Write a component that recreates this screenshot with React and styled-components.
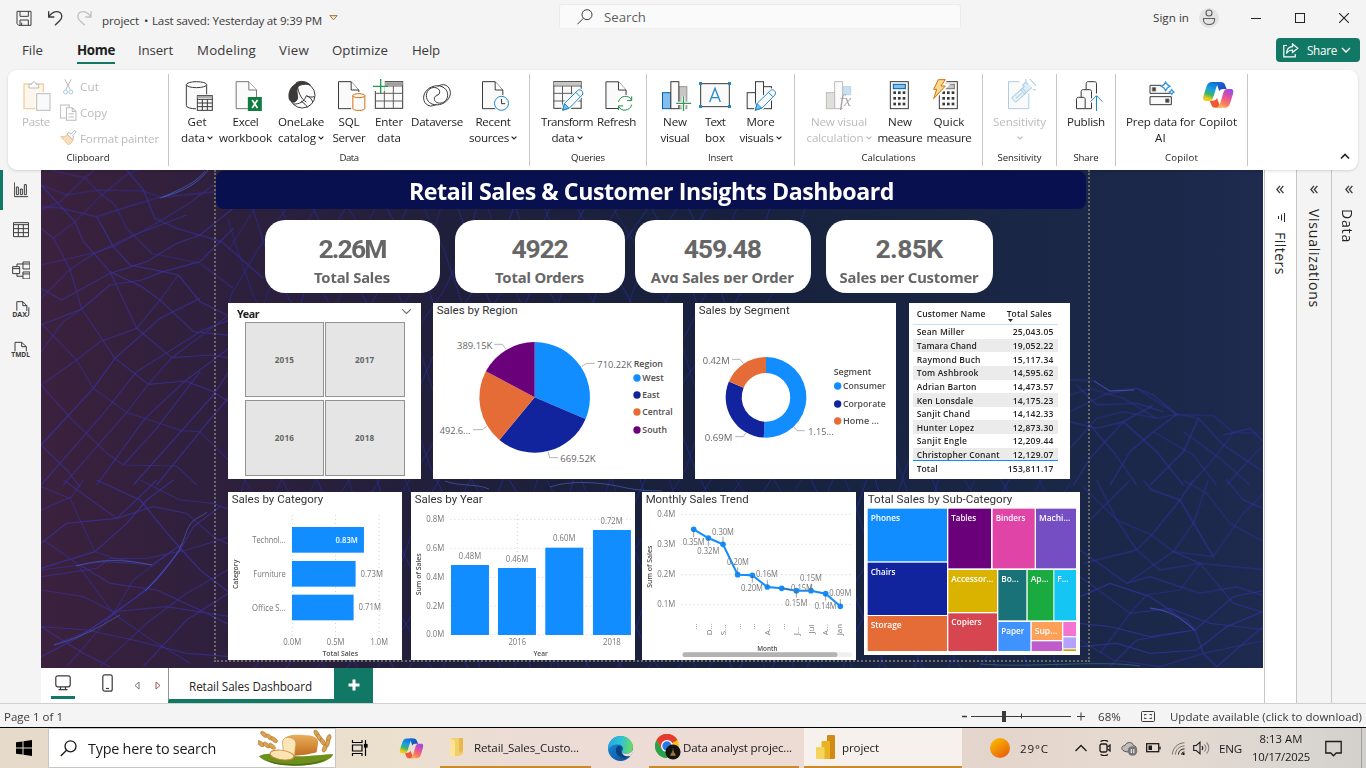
import React, { useLayoutEffect, useRef, useState } from "react";
import styled, { createGlobalStyle, css } from "styled-components";

const UI = '"Open Sans", "Noto Sans", sans-serif';
const DIN = 'Roboto, "Liberation Sans", sans-serif';
const GREEN = "#117865";

const Global = createGlobalStyle`
  * { box-sizing: border-box; }
  body { margin: 0; overflow: hidden; background: #f4f4f4; font-family: ${UI}; color: #252423; }
  svg { display: block; flex: none; }
  svg text { white-space: pre; }
`;

/* Text that settles to a known advance by adjusting its tracking. */
const FitSpan = styled.span`
  display: inline-block;
  justify-self: start;
  align-self: inherit;
  white-space: nowrap;
  ${(p) => p.$vertical && css`writing-mode: vertical-rl;`}
`;
function Fit({ w, vertical, children }) {
  const ref = useRef(null);
  const [ls, setLs] = useState(0);
  useLayoutEffect(() => {
    const el = ref.current;
    el.style.letterSpacing = "0px";
    const r = el.getBoundingClientRect();
    const next = (w - (vertical ? r.height : r.width)) / String(children).length;
    el.style.letterSpacing = `${next}px`;
    setLs(next);
  }, [w, vertical, children]);
  return (
    <FitSpan ref={ref} $vertical={vertical} style={{ letterSpacing: `${ls}px` }}>
      {children}
    </FitSpan>
  );
}

const Screen = styled.div`
  width: 1366px;
  height: 768px;
  display: flex;
  flex-direction: column;
  background: #f4f4f4;
  overflow: hidden;
`;
const Cell = styled.div`
  width: ${(p) => p.$w}px;
  flex: none;
  display: flex;
  align-items: center;
  justify-content: ${(p) => (p.$center ? "center" : "flex-start")};
`;

/* ---------- title bar ---------- */
const TitleBar = styled.header`
  height: 35px;
  display: flex;
  align-items: center;
  padding-left: 16px;
  font-size: 11.6px;
  color: #3b3a39;
  flex: none;
`;
const DocName = styled(Cell)`padding-top: 5px;`;
const SearchBox = styled.div`
  width: 402px;
  height: 25px;
  margin-top: -2px;
  background: #fafafa;
  border: 1px solid #ebebeb;
  border-bottom-color: #f0f0f0;
  border-radius: 3px;
  display: flex;
  align-items: center;
  padding-left: 17px;
  gap: 11px;
  font-size: 13.2px;
  color: #605e5c;
`;
const Avatar = styled.div`
  width: 20px;
  height: 20px;
  border-radius: 50%;
  background: #e3e3e3;
  display: flex;
  align-items: center;
  justify-content: center;
`;

/* ---------- menu ---------- */
const MenuBar = styled.nav`
  height: 35px;
  display: flex;
  align-items: flex-start;
  padding-left: 22px;
  font-size: 13.3px;
  color: #3b3a39;
  flex: none;
`;
const MenuItem = styled.div`
  width: ${(p) => p.$w}px;
  margin-right: ${(p) => p.$gap}px;
  height: 29px;
  line-height: 31px;
  flex: none;
  border-bottom: 2px solid ${(p) => (p.$active ? GREEN : "transparent")};
  ${(p) => p.$active && css`font-weight: 700; color: #201f1e;`}
`;
const ShareButton = styled.div`
  margin-left: auto;
  margin-right: 6px;
  margin-top: 3px;
  width: 84px;
  height: 24px;
  border-radius: 4px;
  background: ${GREEN};
  color: #fff;
  display: flex;
  align-items: center;
  padding-left: 7px;
  gap: 4px;
  font-size: 11.7px;
  font-weight: 500;
`;

/* ---------- ribbon ---------- */
const RibbonWrap = styled.div`
  height: 100px;
  padding: 0 8px;
  flex: none;
  position: relative;
  z-index: 2;
`;
const Ribbon = styled.div`
  height: 100px;
  background: #fff;
  border-radius: 9px;
  box-shadow: 0 1px 3px rgba(0, 0, 0, 0.14);
  display: flex;
  padding-top: 4px;
`;
const Group = styled.section`
  width: ${(p) => p.$w}px;
  height: 92px;
  flex: none;
  border-right: 1px solid #c8c6c4;
  display: flex;
  flex-direction: column;
  align-items: center;
`;
const GroupBody = styled.div`
  width: 100%;
  height: 77px;
  display: flex;
  padding-left: ${(p) => p.$pl}px;
`;
const GroupLabel = styled.div`
  height: 14px;
  line-height: 14px;
  font-size: 9.6px;
  color: #252423;
`;
const BigButton = styled.div`
  width: ${(p) => p.$w}px;
  flex: none;
  padding-top: 5px;
  display: flex;
  flex-direction: column;
  align-items: center;
  font-size: 11.6px;
  color: ${(p) => (p.$off ? "#bdbbb9" : "#252423")};
`;
const Line = styled.div`
  height: 16px;
  margin-top: ${(p) => (p.$first ? 2 : 0)}px;
  display: flex;
  align-items: center;
  justify-content: center;
  gap: 2px;
  white-space: nowrap;
  > svg { margin-top: 2px; }
`;
const ClipList = styled.div`
  display: flex;
  flex-direction: column;
  padding-left: 5px;
`;
const ClipItem = styled.div`
  height: 26px;
  display: flex;
  align-items: center;
  gap: 3px;
  font-size: 11.6px;
  color: #bdbbb9;
`;
const Collapse = styled.div`
  margin-left: auto;
  align-self: flex-end;
  padding: 0 8px 10px 0;
`;

const Glyph = ({ vb, w = 32, h = 32, children, sw = 3, color = "#3b3a39" }) => (
  <svg width={w} height={h} viewBox={vb} fill="none" stroke={color} strokeWidth={sw} strokeLinejoin="miter">
    {children}
  </svg>
);
const Chevron = ({ color = "#252423", w = 6, sw = 1.6 }) => (
  <svg width={w} height={w / 1.6} viewBox="0 0 8 5" fill="none" stroke={color} strokeWidth={sw}>
    <path d="M0.8 0.8 4 4 7.2 0.8" />
  </svg>
);

const Doc = ({ x }) => (
  <g>
    <path d={`M${x} 245h38l23 25v56h-61z`} fill="#fafafa" />
    <path d={`M${x + 38} 245v25h23`} fill="#fff" />
  </g>
);
const Cylinder = ({ x, y, w, h, ry, stroke = "#3b3a39", fill = "#fafafa" }) => (
  <g stroke={stroke} fill={fill}>
    <path d={`M${x} ${y}v${h}c0 ${ry * 1.4} ${w} ${ry * 1.4} ${w} 0v${-h}`} />
    <ellipse cx={x + w / 2} cy={y} rx={w / 2} ry={ry} />
  </g>
);
const Pencil = ({ x, y }) => (
  <g transform={`translate(${x} ${y})`} stroke="#2088c8">
    <path d="M0 62 6 41 46 2c8-6 20 6 13 14L20 56z" fill="#fff" stroke="#fff" strokeWidth="9" />
    <path d="M0 62 6 41 46 2c8-6 20 6 13 14L20 56z" fill="#fafafa" />
    <path d="M1 61 6 42l13 13z" fill="#83beec" />
    <path d="m40 8 13 13" />
  </g>
);
const CalcPad = ({ x, top = "#83beec", topStroke = "#0063b1" }) => (
  <g>
    <rect x={x} y="245" width="54" height="81" fill="#fafafa" />
    <rect x={x + 9} y="253" width="36" height="13" fill={top} stroke={topStroke} />
    {[0, 1, 2].map((r) =>
      [0, 1, 2].map((c) => (
        <rect key={`${r}${c}`} x={x + 9 + c * 14} y={274 + r * 17} width="8" height="8" fill="#3b3a39" stroke="none" />
      ))
    )}
  </g>
);

let copilotSeq = 0;
function CopilotLogo({ w = 32, h = 32, vb = "906 237 96 96" }) {
  const [id] = useState(() => `cp${copilotSeq++}`);
  return (
    <svg width={w} height={h} viewBox={vb}>
      <defs>
        <linearGradient id={`${id}a`} x1="0.6" y1="0" x2="0.3" y2="1">
          <stop offset="0" stopColor="#0a6fd8" />
          <stop offset="0.4" stopColor="#1ba0e0" />
          <stop offset="0.65" stopColor="#35b56b" />
          <stop offset="0.9" stopColor="#f0cc14" />
        </linearGradient>
        <linearGradient id={`${id}b`} x1="0.7" y1="0" x2="0.3" y2="1">
          <stop offset="0" stopColor="#9a4be8" />
          <stop offset="0.4" stopColor="#e2539a" />
          <stop offset="0.75" stopColor="#fb7a5c" />
          <stop offset="1" stopColor="#ffb657" />
        </linearGradient>
        <linearGradient id={`${id}c`} x1="0" y1="0" x2="1" y2="1">
          <stop offset="0" stopColor="#1a6fe0" />
          <stop offset="1" stopColor="#1b3fae" />
        </linearGradient>
      </defs>
      <path d="M948 246h14c9 0 12 4 14 11l4 10h-10c-7 0-10 2-12 7z" fill={`url(#${id}c)`} />
      <path d="M962 323h-16c-8 0-11-4-13-11l-4-10h9c7 0 10-2 13-8z" fill="#ee5a38" />
      <path d="M937 246h24c-7 3-10 9-12 16l-9 29c-3 9-6 12-13 12h-8c-10 0-11-7-9-14l9-28c4-12 9-15 18-15z" fill={`url(#${id}a)`} />
      <path d="M973 323h-24c7-3 10-9 12-15l9-30c3-8 6-11 13-11h8c10 0 10 7 8 14l-8 27c-4 12-9 15-18 15z" fill={`url(#${id}b)`} />
    </svg>
  );
}

const icons = {
  get: (
    <Glyph vb="543 237 96 96">
      <Cylinder x={559} y={254} w={61} h={63} ry={9} />
      <rect x="588" y="283" width="52" height="50" fill="#fff" stroke="none" />
      <rect x="592" y="287" width="45" height="44" fill="#fafafa" />
      <path d="M592 291h45" stroke="#a19f9d" strokeWidth="5" />
      <path d="M592 298h45M592 309h45M592 320h45M607 298v33M622 298v33" />
    </Glyph>
  ),
  excel: (
    <Glyph vb="688 237 98 96" w={33}>
      <g stroke="#797775"><Doc x={709} /></g>
      <rect x="744" y="291" width="42" height="42" fill="#107c41" stroke="none" />
      <path d="M757 300 773 324M773 300 757 324" stroke="#fff" strokeWidth="5" />
    </Glyph>
  ),
  onelake: (
    <Glyph vb="855 237 96 96">
      <circle cx="907" cy="286" r="38" fill="#fafafa" />
      <path d="M868 298c-5-23 6-42 26-49 2 9-4 13-3 26 1 12 5 20-3 28-6 6-15 5-20-5z" fill="#3b3a39" />
      <path d="M888 249c11-8 32-6 43 6-12-4-27-3-38 5z" fill="#3b3a39" />
      <path d="M893 260c3 22 12 38 26 46M943 290c-9 2-17 2-24-3-6 18-20 26-39 25M921 288c8 2 15 10 17 18M903 303c8 6 18 14 19 19" />
    </Glyph>
  ),
  sql: (
    <Glyph vb="999 237 98 96" w={33}>
      <Doc x={1015} />
      <rect x="1053" y="276" width="44" height="57" fill="#fff" stroke="none" />
      <Cylinder x={1058} y={287} w={36} h={38} ry={6} stroke="#d86d0c" />
    </Glyph>
  ),
  enter: (
    <Glyph vb="1119 237 96 96">
      <rect x="1126" y="245" width="82" height="80" fill="#fafafa" />
      <path d="M1126 251h82" stroke="#a19f9d" strokeWidth="9" />
      <path d="M1126 258h82M1126 280h82M1126 303h82M1153 258v67M1180 258v67" stroke="#605e5c" />
      <rect x="1117" y="237" width="37" height="36" fill="#fff" stroke="none" />
      <path d="M1142 237v45M1119 259h45" stroke="#1ca04c" strokeWidth="4" />
    </Glyph>
  ),
  dataverse: (
    <Glyph vb="1263 237 96 96">
      <path d="M1291 318c-20-3-26-27-14-43 12-17 39-24 56-11 14 11 13 33-1 42-11 7-27 3-29-8-1-7 4-12 9-11" />
      <path d="M1331 254c20 3 26 27 14 43-12 17-39 24-56 11-14-11-13-33 1-42 11-7 27-3 29 8 1 7-4 12-9 11" />
      <path d="M1291 318c8 0 13-2 18-5M1331 254c-8 0-13 2-18 5" />
    </Glyph>
  ),
  recent: (
    <Glyph vb="111 237 98 96" w={33}>
      <Doc x={127} />
      <circle cx="184" cy="310" r="25" fill="#fff" stroke="none" />
      <circle cx="184" cy="310" r="21" stroke="#2088c8" fill="#fafafa" />
      <path d="M184 297v14h11" />
    </Glyph>
  ),
  transform: (
    <Glyph vb="333 237 98 96" w={33}>
      <rect x="341" y="245" width="82" height="80" fill="#fafafa" />
      <path d="M341 251h82" stroke="#c8c6c4" strokeWidth="9" />
      <path d="M341 258h82M341 280h82M341 303h82M367 258v67M394 258v67" stroke="#605e5c" />
      <Pencil x={367} y={269} />
    </Glyph>
  ),
  refresh: (
    <Glyph vb="481 237 100 96" w={33}>
      <Doc x={499} />
      <circle cx="557" cy="310" r="26" fill="#fff" stroke="none" />
      <path d="M537 306c4-20 32-23 40-5M577 314c-4 20-32 23-40 5M577 289v13h-14M537 331v-13h14" stroke="#1f8a44" />
    </Glyph>
  ),
  newvisual: (
    <Glyph vb="657 237 98 96" w={33}>
      <rect x="667" y="278" width="25" height="48" fill="#83beec" stroke="#0063b1" />
      <rect x="716" y="260" width="24" height="66" fill="#c8c6c4" stroke="#979593" />
      <rect x="692" y="245" width="24" height="81" fill="#fafafa" />
      <path d="M730 289v45M708 310h45" stroke="#fff" strokeWidth="10" />
      <path d="M730 289v45M708 310h45" stroke="#3a9a56" strokeWidth="4" />
    </Glyph>
  ),
  textbox: (
    <Glyph vb="777 237 96 96">
      <rect x="782" y="251" width="86" height="69" fill="#fafafa" />
      <path d="M809 306 825 265 841 306M814 293h22" stroke="#2088c8" strokeWidth="4" />
      <path d="M777 246h9v9h-9zM864 246h9v9h-9zM777 315h9v9h-9zM864 315h9v9h-9z" fill="#2088c8" stroke="none" />
    </Glyph>
  ),
  more: (
    <Glyph vb="913 237 98 96" w={33}>
      <rect x="922" y="278" width="25" height="48" fill="#fafafa" />
      <rect x="971" y="260" width="24" height="66" fill="#fafafa" />
      <rect x="947" y="245" width="24" height="81" fill="#fafafa" />
      <Pencil x={946} y={269} />
    </Glyph>
  ),
  newcalc: (
    <Glyph vb="1149 237 96 96" color="#bdbbb9">
      <rect x="1159" y="278" width="25" height="48" fill="#e1dfdd" />
      <rect x="1208" y="260" width="24" height="24" fill="#c7e0f4" stroke="#b5d6ef" />
      <path d="M1208 326h-24v-81h24v50" fill="#fafafa" />
      <text x="1199" y="319" fontFamily="Liberation Serif" fontStyle="italic" fontSize="48" fill="#a3a19f" stroke="none">fx</text>
    </Glyph>
  ),
  measure: <Glyph vb="-48 237 96 96"><CalcPad x={-29} /></Glyph>,
  quick: (
    <Glyph vb="99 237 96 96">
      <CalcPad x={118} top="#c8c6c4" topStroke="#797775" />
      <path d="M114 237h24l-13 20h14l-39 41 9-28h-10z" fill="#fff" stroke="#fff" strokeWidth="10" />
      <path d="M115 239h21l-13 19h13l-35 38 9-28h-9z" fill="#f8db8f" stroke="#d86d0c" />
    </Glyph>
  ),
  sensitivity: (
    <Glyph vb="309 237 98 96" w={33} color="#aacde6">
      <path d="M358 245h-33v81h61v-46" fill="#fafafa" />
      <g transform="rotate(-42 356 287)">
        <rect x="336" y="278" width="40" height="17" fill="#eef6fb" />
        <path d="M343 287h26" />
      </g>
      <g transform="rotate(-42 382 262)">
        <path d="M362 254h14v-7h12v7h14v17h-40z" fill="#ddeefa" />
        <path d="M391 249c0-12 13-12 13 0v28c0 9-13 9-13 0" fill="#fff" />
        <path d="M369 254v17" />
      </g>
    </Glyph>
  ),
  publish: (
    <Glyph vb="508 237 98 96" w={33}>
      <path d="M527 326v-28c0-4 2-6 6-6h14c4 0 6 2 6 6v28zM541 292v-17c0-4 2-6 6-6h18c5 0 7 2 7 6v51h-19M556 269v-18c0-4 2-6 6-6h19c4 0 6 2 6 6v31" fill="#fafafa" />
      <path d="M587 334v-47M569 305l18-18 18 18" stroke="#fff" strokeWidth="10" />
      <path d="M587 334v-46M569 305l18-18 18 18" stroke="#2088c8" />
    </Glyph>
  ),
  prep: (
    <Glyph vb="733 237 96 96">
      <path d="M782 256h-34v24h60M748 290h64v24h-64z" fill="#fafafa" />
      <path d="M755 263h10v10h-10zM795 297h10v10h-10z" fill="#3b3a39" stroke="#797775" />
      <path d="M795 246l5 8 8 5-8 5-5 8-5-8-8-5 8-5zM813 269l3 4 4 3-4 3-3 4-3-4-4-3 4-3z" stroke="#3a96dd" strokeWidth="4" fill="#fff" />
    </Glyph>
  ),
  copilot: <CopilotLogo />,
};

/* text rows: [text, width, hasChevron] */
const groups = [
  { label: ["Data", 19], w: 361, pl: 6, items: [
    { i: "get", w: 44, a: ["Get", 19], b: ["data", 24, 1] },
    { i: "excel", w: 53, a: ["Excel", 26], b: ["workbook", 53] },
    { i: "onelake", w: 58, a: ["OneLake", 46], b: ["catalog", 38, 1] },
    { i: "sql", w: 38, a: ["SQL", 21], b: ["Server", 33] },
    { i: "enter", w: 42, a: ["Enter", 28], b: ["data", 24] },
    { i: "dataverse", w: 54, a: ["Dataverse", 52] },
    { i: "recent", w: 58, a: ["Recent", 35], b: ["sources", 40, 1] },
  ] },
  { label: ["Queries", 34], w: 117, pl: 8, items: [
    { i: "transform", w: 58, a: ["Transform", 52], b: ["data", 23, 1] },
    { i: "refresh", w: 41, a: ["Refresh", 39] },
  ] },
  { label: ["Insert", 25], w: 148, pl: 10, items: [
    { i: "newvisual", w: 36, a: ["New", 24], b: ["visual", 29] },
    { i: "textbox", w: 44, a: ["Text", 20], b: ["box", 20] },
    { i: "more", w: 47, a: ["More", 28], b: ["visuals", 34, 1] },
  ] },
  { label: ["Calculations", 54], w: 188, pl: 7, items: [
    { i: "newcalc", w: 74, a: ["New visual", 56], b: ["calculation", 57, 1], off: 1 },
    { i: "measure", w: 48, a: ["New", 24], b: ["measure", 45] },
    { i: "quick", w: 50, a: ["Quick", 31], b: ["measure", 45] },
  ] },
  { label: ["Sensitivity", 44], w: 74, pl: 0, items: [
    { i: "sensitivity", w: 73, a: ["Sensitivity", 53], b: ["", 0, 1], off: 1 },
  ] },
  { label: ["Share", 25], w: 59, pl: 0, items: [{ i: "publish", w: 58, a: ["Publish", 38] }] },
  { label: ["Copilot", 33], w: 132, pl: 6, items: [
    { i: "prep", w: 77, a: ["Prep data for", 69], b: ["AI", 11] },
    { i: "copilot", w: 38, a: ["Copilot", 38] },
  ] },
];

/* ---------- workspace ---------- */
const Workspace = styled.div`display: flex; height: 533px; flex: none;`;
const Rail = styled.aside`
  width: 41px;
  flex: none;
  background: #f4f4f4;
`;
const RailItem = styled.div`
  height: 40px;
  display: flex;
  align-items: center;
  justify-content: center;
  padding-right: 2px;
  border-left: 3px solid ${(p) => (p.$active ? GREEN : "transparent")};
`;
const Center = styled.div`width: 1223px; flex: none; background: #fff; display: flex; flex-direction: column;`;
const Canvas = styled.main`
  width: 1222px;
  height: 498px;
  flex: none;
  display: grid;
  grid-template: 498px / 1222px;
  overflow: hidden;
  > * { grid-area: 1 / 1; }
`;
const Page = styled.div`
  width: 876px;
  height: 492px;
  margin-left: 172.5px;
  border: 2px dotted #6c6a68;
  border-top: none;
  z-index: 1;
`;
const Banner = styled.h1`
  margin: 1px 0 0 0.5px;
  width: 870px;
  height: 37.5px;
  border-radius: 8px;
  background: #08104f;
  color: #fff;
  font-size: 23.2px;
  font-weight: 700;
  line-height: 40px;
  padding-left: 193px;
`;
const Row = styled.div`
  display: flex;
  align-items: flex-start;
  margin-top: ${(p) => p.$mt}px;
`;
const Kpi = styled.div`
  width: ${(p) => p.$w}px;
  margin-left: ${(p) => p.$ml}px;
  height: 73px;
  flex: none;
  background: #fff;
  border-radius: 20px;
  color: #666;
  font-family: ${DIN};
  font-weight: 700;
  text-align: center;
`;
const KpiValue = styled.div`font-size: 26.5px; line-height: 30px; padding-top: 14px; margin-left: -1px;`;
const KpiLabel = styled.div`
  font-family: "Noto Sans", sans-serif;
  font-size: 14.8px;
  line-height: 20px;
  height: 16px;
  margin: 3px 0 0 -1px;
  overflow: hidden;
`;
const Panel = styled.div`
  width: ${(p) => p.$w}px;
  height: ${(p) => p.$h}px;
  margin-left: ${(p) => p.$ml}px;
  flex: none;
  background: #fff;
  overflow: hidden;
`;
const SlicerHead = styled.div`
  height: 18px;
  padding: 2px 9px 0;
  display: flex;
  align-items: center;
  justify-content: space-between;
  font-family: "Noto Sans", sans-serif;
  font-size: 10.8px;
  font-weight: 700;
  > svg { margin-top: -4px; }
`;
const SlicerGrid = styled.div`
  margin: 1px 0 0 17px;
  display: grid;
  grid-template: 75px 76px / 79px 79.5px;
  gap: 2.5px 1px;
`;
const SlicerTile = styled.div`
  background: #e5e5e5;
  border: 1px solid #929292;
  display: flex;
  align-items: center;
  justify-content: center;
  font-size: 8.2px;
  font-weight: 700;
  color: #666;
`;
const Table = styled.div`padding: 3px 0 0 4px; width: 149px; font-size: 8.5px; font-weight: 600; color: #252423;`;
const TRow = styled.div`
  display: grid;
  grid-template-columns: 1fr auto;
  align-items: ${(p) => (p.$head ? "start" : "center")};
  height: ${(p) => (p.$head ? 19 : 13.65)}px;
  padding: 0 4px 0 4px;
  line-height: ${(p) => (p.$head ? 15 : 13)}px;
  background: ${(p) => (p.$alt ? "#ebebeb" : "transparent")};
  border-bottom: ${(p) => (p.$head ? "1px solid #c7e0f4" : p.$last ? "1px solid #118dff" : "none")};
`;
const SortCol = styled.div`
  display: flex;
  flex-direction: column;
  line-height: 13px;
  padding-top: 1px;
  padding-right: 2px;
  > span { align-self: flex-start; }
  svg { margin: -1px 0 0 1px; }
`;

/* Background mesh, traced as polylines per zone. */
const meshLeftTop = [
  "123,60 200,90 300,75 430,78 480,97 560,70 625,15",
  "150,15 255,38 290,75 345,120 380,190 455,265 600,295 700,370",
  "123,135 180,110 255,38 290,10",
  "123,125 175,128 290,155 400,120 480,97 650,80",
  "360,0 385,20 430,75 465,160 530,190 665,230 790,340",
  "160,220 225,170 300,95 385,25 460,0",
  "123,190 160,220 210,313 245,432 345,580 445,658",
  "123,60 225,170 250,230 330,320 425,365 480,405 580,500 700,512",
  "290,155 340,245 390,300 490,320 535,330 600,410 700,460",
  "123,300 275,265 340,245 460,180 560,120 640,60",
  "123,400 210,313 280,268 390,215 560,150",
  "123,370 185,405 330,325 440,290 530,235 600,210 700,130",
  "123,480 245,432 330,360 425,345 490,320 600,290 700,190",
  "123,475 230,585 280,670 380,742 545,797 600,800 700,900",
  "123,660 230,585 300,530 410,490 480,405 535,330",
  "330,320 410,490 515,578 630,570 700,580",
  "445,658 555,648 640,680 700,720",
  "123,840 280,670 345,580 480,460 600,400",
  "190,960 380,742 445,658 515,578 700,440",
  "123,960 315,740 410,620 600,500 700,460",
  "290,960 435,760 555,648 700,540",
  "400,960 545,797 640,690 700,600",
  "123,660 210,757 315,860 370,900 530,903 590,960",
  "123,840 200,915 240,965",
  "370,900 470,790 600,620",
  "470,960 600,800 700,680", "123,560 190,470 245,432",
];
const meshLeftLow = [
  "123,20 210,55 285,215 345,235 455,255",
  "123,90 215,50 250,0", "190,0 350,115 460,80 560,100 640,170 700,200",
  "123,190 200,130 350,115 440,30 470,0",
  "123,265 285,215 380,130 440,60 520,0",
  "123,290 290,265 330,235 440,235 560,210 690,170",
  "123,270 240,255 310,245 400,250 455,255 550,190",
  "160,495 260,455 340,400 440,330 540,210 580,140 660,80",
  "123,530 230,475 330,410 410,350 470,300 545,205",
  "130,180 230,250 340,400 440,470 570,550",
  "123,330 250,350 340,395 500,380 690,410",
  "123,440 260,450 400,480 560,520 690,530",
  "240,255 330,310 470,330 600,390 700,440",
  "200,560 340,400 400,300 520,210",
  "300,560 440,430 560,340 700,260", "430,560 560,420 700,330",
  "123,440 250,520 330,560",
  "290,0 420,60 510,170 600,270 690,340", "420,0 540,60 640,70 690,90",
];
const meshRight = [
  "700,20 800,120 905,165 970,215 1090,230 1180,100 1240,40",
  "720,120 800,40 840,0", "740,0 800,120 860,210 930,270 1050,250 1250,270",
  "700,250 860,210 905,165 990,60 1030,0", "880,0 905,30 990,60 1090,230",
  "1000,0 1070,40 1140,130 1250,190", "1075,0 1030,130 970,215 830,310",
  "690,210 760,260 830,310 900,290 1050,340 1160,320 1250,350",
  "690,350 780,310 900,350 960,390 1035,450 1060,520 1100,560",
  "690,290 840,400 890,345 990,330 1050,250", "750,520 840,400 960,385 1080,430 1250,450",
  "690,430 780,440 900,470 1035,450 1150,350 1250,330",
  "690,500 800,490 900,520 1040,510 1130,440 1250,390",
  "690,480 790,540 930,560 1060,520 1250,480", "900,385 960,395 1010,420 1035,450",
  "780,560 860,480 1035,450", "1130,0 1180,60 1250,90", "1100,560 1250,430",
  "970,215 1050,250 1150,370 1250,400",
];
const meshRightTop = [
  "540,645 612,648 660,678 740,670 860,748 970,752 1030,802 1120,805",
  "540,690 600,670 700,700 800,760 860,748 925,760",
  "540,740 640,690 740,670 790,690 860,748", "560,660 620,720 740,715 820,740",
  "540,770 620,790 700,770 790,720", "540,850 620,760 700,740 800,760",
  "550,960 600,880 700,770", "660,960 720,860 790,800 860,748",
  "780,960 880,860 925,760", "900,960 980,870 1030,802", "1010,960 1090,870 1120,840",
  "590,770 670,860 740,960", "700,770 800,860 880,960", "790,800 910,870 980,960",
  "880,800 990,880 1080,960", "925,760 1000,840 1120,920", "1000,810 1080,790 1120,830",
];
const seamMesh = (() => {
  const out = [];
  for (let i = 0; i < 30; i++) {
    const x = 120 + i * 33;
    const falling = [];
    const rising = [];
    for (let k = 0; k < 12; k++) {
      const y = 205 + k * 44;
      falling.push(`${(x + k * 20 + Math.sin(i * 0.8 + k) * 7).toFixed(1)},${y}`);
      rising.push(`${(x + 130 - k * 22 + Math.cos(i * 0.6 + k * 1.4) * 7).toFixed(1)},${y}`);
    }
    if (x < 690) out.push(falling.join(" "), rising.join(" "));
    else out.push(falling.slice(5).join(" "), rising.slice(5).join(" "));
  }
  return out;
})();
const Lines = ({ list, t, sw = 3.6 }) => (
  <g transform={t} strokeWidth={sw}>
    {list.map((p, i) => <polyline key={i} points={p} opacity={0.6 + ((i * 37) % 30) / 100} />)}
  </g>
);
const Wallpaper = () => (
  <svg width="1222" height="498" viewBox="41 170 1222 498">
    <defs>
      <linearGradient id="wall" x1="0" x2="1">
        <stop offset="0" stopColor="#3b213d" />
        <stop offset="0.15" stopColor="#2e203d" />
        <stop offset="0.32" stopColor="#211f3b" />
        <stop offset="0.55" stopColor="#17213d" />
        <stop offset="0.8" stopColor="#1a2645" />
        <stop offset="1" stopColor="#1e2a4e" />
      </linearGradient>
      <clipPath id="seam"><rect x="228" y="205" width="842" height="465" /></clipPath>
    </defs>
    <rect x="41" y="170" width="1222" height="498" fill="url(#wall)" />
    <g fill="none" stroke="#3b35b0" strokeLinejoin="round" opacity="0.74">
      <Lines list={meshLeftTop} t="translate(0 165) scale(.33333)" />
      <Lines list={meshLeftLow} t="translate(0 480) scale(.33333)" />
      <Lines list={meshRight} t="translate(850 480) scale(.33333)" />
      <Lines list={meshRightTop} t="translate(890 165) scale(.33333)" />
      <g clipPath="url(#seam)" stroke="#2b33ac" opacity="0.85"><Lines list={seamMesh} sw={1.1} /></g>
    </g>
    <g fill="none" stroke="#5279d8" strokeWidth="1" opacity="0.5">
      <path d="M160 198c22-6 38-14 48-28M163 197c20-9 34-15 42-26" />
      <path d="M54 645c32-9 48-20 66-30M145 591c18-18 34-36 40-55s12-16 22-24M76 566c22-6 42-8 76-1" />
      <path d="M1150 608c18 2 32 10 44 22M1094 381l16 10 24-1" />
      <path d="M445 481c16 6 30 2 44 8M550 487c20-7 50-5 72 0s30 3 40 4" />
      <path d="M980 664c50 4 120-4 160 2" stroke="#3b8ca0" />
    </g>
  </svg>
);

/* ---------- charts ---------- */
const T = ({ x, y, w, s = 25, f = UI, a = "start", c = "#777", b = 400, children, ...r }) => (
  <text x={x} y={y} fontSize={s} fontFamily={f} textAnchor={a} fill={c} fontWeight={b}
    textLength={w} lengthAdjust="spacingAndGlyphs" {...r}>{children}</text>
);
const Title = (p) => <T s={35} f={DIN} c="#333" {...p} />;
const Chart = ({ vb, w, h, children }) => <svg width={w} height={h} viewBox={vb}>{children}</svg>;
const polar = (cx, cy, r, deg) => {
  const t = ((deg - 90) * Math.PI) / 180;
  return `${(cx + r * Math.cos(t)).toFixed(1)} ${(cy + r * Math.sin(t)).toFixed(1)}`;
};
const arc = (cx, cy, R, r, a0, a1) => {
  const big = a1 - a0 > 180 ? 1 : 0;
  return r
    ? `M${polar(cx, cy, R, a0)}A${R} ${R} 0 ${big} 1 ${polar(cx, cy, R, a1)}L${polar(cx, cy, r, a1)}A${r} ${r} 0 ${big} 0 ${polar(cx, cy, r, a0)}Z`
    : `M${cx} ${cy}L${polar(cx, cy, R, a0)}A${R} ${R} 0 ${big} 1 ${polar(cx, cy, R, a1)}Z`;
};
const Slices = ({ cx, cy, R, r = 0, data }) => {
  const total = data.reduce((s, d) => s + d[0], 0);
  let at = 0;
  return data.map(([v, fill]) => {
    const a0 = at;
    at += (v / total) * 360;
    return <path key={fill} d={arc(cx, cy, R, r, a0, at)} fill={fill} />;
  });
};
const LegendItem = ({ x, y, w, c, children }) => (
  <g><circle cx={x} cy={y - 8} r="11" fill={c} /><T x={x + 16} y={y} w={w} s={27} b={600} c="#4f4d4b">{children}</T></g>
);
const Leader = ({ d }) => <path d={d} fill="none" stroke="#a6a6a6" strokeWidth="2.5" />;
const grid = { stroke: "#c8c6c4", strokeWidth: 2.5, strokeDasharray: "3 9" };
const BLUE = "#118dff", NAVY = "#12239e", ORANGE = "#e66c37", PURPLE = "#6b007b";

const RegionChart = () => (
  <Chart vb="24 414 750 528" w={250} h={176}>
    <Title x={35} y={447} w={243}>Sales by Region</Title>
    <Slices cx={329} cy={697} R={166} data={[[710.22, BLUE], [669.52, NAVY], [492.6, ORANGE], [389.15, PURPLE]]} />
    <Leader d="M471 604 486 595H510" /><Leader d="M208 538H232L243 552" />
    <Leader d="M144 794H172L184 785" /><Leader d="M369 860 374 878H400" />
    <T x={517} y={608} w={104} s={27} c="#666">710.22K</T>
    <T x={96} y={551} w={106} s={27} c="#666">389.15K</T>
    <T x={44} y={806} w={92} s={27} c="#666">492.6...</T>
    <T x={406} y={890} w={106} s={27} c="#666">669.52K</T>
    <T x={626} y={606} w={88} s={27} b={600} c="#4f4d4b">Region</T>
    <LegendItem x={636} y={647} w={64} c={BLUE}>West</LegendItem>
    <LegendItem x={636} y={698} w={52} c={NAVY}>East</LegendItem>
    <LegendItem x={636} y={749} w={91} c={ORANGE}>Central</LegendItem>
    <LegendItem x={636} y={803} w={74} c={PURPLE}>South</LegendItem>
  </Chart>
);
const SegmentChart = () => (
  <Chart vb="810 414 603 528" w={201} h={176}>
    <Title x={821} y={447} w={273}>Sales by Segment</Title>
    <Slices cx={1023} cy={697} R={121} r={73} data={[[1.15, BLUE], [0.69, NAVY], [0.42, ORANGE]]} />
    <Leader d="M921 583H945L955 596" /><Leader d="M930 815H955L963 803" /><Leader d="M1106 785 1116 797H1139" />
    <T x={833} y={596} w={81} s={27} c="#666">0.42M</T>
    <T x={839} y={827} w={83} s={27} c="#666">0.69M</T>
    <T x={1150} y={809} w={76} s={27} c="#666">1.15...</T>
    <T x={1226} y={629} w={113} s={27} b={600} c="#4f4d4b">Segment</T>
    <LegendItem x={1238} y={671} w={128} c={BLUE}>Consumer</LegendItem>
    <LegendItem x={1238} y={725} w={128} c={NAVY}>Corporate</LegendItem>
    <LegendItem x={1238} y={776} w={108} c={ORANGE}>Home ...</LegendItem>
  </Chart>
);
const CategoryChart = () => (
  <Chart vb="684 36 521 504" w={173.6} h={168}>
    <Title x={695} y={69} w={275}>Sales by Category</Title>
    {[877, 1007, 1138].map((x) => <path key={x} d={`M${x} 105V470`} {...grid} />)}
    {[[141, 216], [243, 191], [344, 185]].map(([y, w]) => <rect key={y} x="876" y={y} width={w} height="77" fill={BLUE} />)}
    <T x={857} y={189} w={100} a="end">Technol...</T>
    <T x={857} y={291} w={97} a="end">Furniture</T>
    <T x={857} y={393} w={101} a="end">Office S...</T>
    <T x={1007} y={189} w={67} c="#fff" b={600}>0.83M</T>
    <T x={1082} y={291} w={67}>0.73M</T>
    <T x={1076} y={391} w={67}>0.71M</T>
    <T x={877} y={495} w={54} a="middle">0.0M</T>
    <T x={1007} y={495} w={53} a="middle">0.5M</T>
    <T x={1138} y={495} w={52} a="middle">1.0M</T>
    <T x={1021} y={528} w={107} a="middle" s={22} b={600} c="#4f4d4b">Total Sales</T>
    <T x={0} y={0} w={88} a="middle" s={22} b={600} c="#4f4d4b" transform="translate(715 283) rotate(-90)">Category</T>
  </Chart>
);
const YearChart = () => (
  <Chart vb="18 36 671 504" w={223.6} h={168}>
    <Title x={29} y={69} w={204}>Sales by Year</Title>
    {[118, 205, 292, 378, 464].map((y, i) => (
      <g key={y}>
        <path d={`M136 ${y}H678`} {...grid} />
        <T x={118} y={y + 8} w={54} a="end">{`${(0.8 - i * 0.2).toFixed(1)}M`}</T>
      </g>
    ))}
    <path d="M337 105V470M621 105V470" {...grid} />
    {[[138, 255], [279, 264], [421, 203], [564, 150]].map(([x, y]) => (
      <rect key={x} x={x} y={y} width="114" height={465 - y} fill={BLUE} />
    ))}
    <T x={195} y={236} w={67} a="middle">0.48M</T>
    <T x={336} y={246} w={67} a="middle">0.46M</T>
    <T x={478} y={183} w={67} a="middle">0.60M</T>
    <T x={620} y={132} w={66} a="middle">0.72M</T>
    <T x={337} y={495} w={53} a="middle">2016</T>
    <T x={621} y={495} w={53} a="middle">2018</T>
    <T x={407} y={528} w={43} a="middle" s={22} b={600} c="#4f4d4b">Year</T>
    <T x={0} y={0} w={126} a="middle" s={22} b={600} c="#4f4d4b" transform="translate(48 283) rotate(-90)">Sum of Sales</T>
  </Chart>
);
const months = [[866, 148], [910, 174], [954, 193], [998, 284], [1042, 286], [1087, 321], [1130, 325], [1174, 332], [1218, 332], [1262, 341], [1306, 379]];
const MonthChart = () => (
  <Chart vb="711 36 642 504" w={214} h={168}>
    <Title x={722} y={69} w={309}>Monthly Sales Trend</Title>
    {[103, 193, 284, 374].map((y, i) => (
      <g key={y}>
        <path d={`M829 ${y}H1336`} {...grid} />
        <T x={811} y={y + 8} w={54} a="end">{`${(0.4 - i * 0.1).toFixed(1)}M`}</T>
      </g>
    ))}
    <polyline points={months.join(" ")} fill="none" stroke={BLUE} strokeWidth="6" />
    {months.map(([x, y]) => <circle key={x} cx={x} cy={y} r="8.5" fill={BLUE} />)}
    <path d="M866 148v24M910 174v24M954 193v-23M998 284v-22M1042 286v22M1087 321v-21M1130 325l28 4M1174 332v21M1218 332v-21M1262 341v21M1306 379v-22" stroke="#555" strokeWidth="2" opacity="0.85" />
    {[[866, 195, "0.35M"], [910, 222, "0.32M"], [954, 165, "0.30M"], [999, 254, "0.20M"], [1041, 332, "0.20M"],
      [1086, 291, "0.16M"], [1191, 332, "0.15M"], [1174, 378, "0.15M"], [1218, 303, "0.15M"], [1262, 387, "0.14M"], [1306, 348, "0.09M"]].map(([x, y, l]) => (
      <T key={`${x}${y}`} x={x} y={y} w={66} a="middle">{l}</T>
    ))}
    {["...", "D...", "S...", "...", "...", "A...", "...", "J...", "Jul", "A...", "Jan"].map((m, i) => {
      const end = m.startsWith(".") ? 449 : m === "Jul" ? 461 : 466;
      return <text key={i} fontSize="24" fontFamily={UI} fill="#777" transform={`translate(${876 + i * 43.8 + (i > 8 ? -2 : 0)} ${end}) rotate(-90)`}>{m}</text>;
    })}
    <T x={1087} y={513} w={61} a="middle" s={22} b={600} c="#4f4d4b">Month</T>
    <T x={0} y={0} w={126} a="middle" s={22} b={600} c="#4f4d4b" transform="translate(741 260) rotate(-90)">Sum of Sales</T>
    <rect x="833" y="517" width="508" height="14" rx="7" fill="#efefef" />
    <rect x="833" y="517" width="464" height="14" rx="5" fill="#b3b3b3" />
  </Chart>
);
const tiles = [
  [53, 86, 291, 244, BLUE, "Phones", 88], [53, 248, 291, 405, NAVY, "Chairs", 74], [53, 408, 291, 513, ORANGE, "Storage", 93],
  [295, 86, 423, 265, PURPLE, "Tables", 74], [428, 86, 554, 265, "#e044a7", "Binders", 89], [558, 86, 678, 265, "#744ec2", "Machi...", 94],
  [295, 270, 441, 396, "#d9b300", "Accessor...", 126], [445, 270, 529, 421, "#197278", "Bo...", 52], [533, 270, 610, 421, "#1aab40", "Ap...", 54],
  [613, 270, 678, 421, "#15c6f4", "F...", 34], [295, 400, 441, 513, "#d64550", "Copiers", 91], [445, 426, 541, 513, "#4092ff", "Paper", 69],
  [545, 426, 636, 480, "#ffa058", "Sup...", 68], [545, 484, 636, 513, "#be5dc9"], [640, 426, 678, 468, "#f472d0"], [640, 472, 678, 505, "#b5a1ff"], [640, 508, 678, 513, "#c4a200"],
];
const TreeChart = () => (
  <Chart vb="42 36 648 489" w={216} h={163}>
    <Title x={53} y={69} w={434}>Total Sales by Sub-Category</Title>
    {tiles.map(([x0, y0, x1, y1, c, l, w]) => (
      <g key={c}>
        <rect x={x0} y={y0} width={x1 - x0} height={y1 - y0} fill={c} />
        {l && <T x={x0 + 9} y={y0 + 36} w={w} s={28} c="#fff" b={600}>{l}</T>}
      </g>
    ))}
  </Chart>
);

const customers = [
  ["Sean Miller", 48, "25,043.05"], ["Tamara Chand", 60, "19,052.22"], ["Raymond Buch", 64, "15,117.34"],
  ["Tom Ashbrook", 62, "14,595.62"], ["Adrian Barton", 60, "14,473.57"], ["Ken Lonsdale", 56.5, "14,175.23"],
  ["Sanjit Chand", 53.5, "14,142.33"], ["Hunter Lopez", 57.5, "12,873.30"], ["Sanjit Engle", 50.5, "12,209.44"],
  ["Christopher Conant", 83, "12,129.07"],
];

/* ---------- side panes ---------- */
const Pane = styled.aside`
  width: ${(p) => p.$w}px;
  flex: none;
  background: ${(p) => (p.$white ? "#fff" : "#f4f4f4")};
  border-left: 1px solid #c8c6c4;
  display: flex;
  flex-direction: column;
  align-items: center;
  padding-top: 15px;
  padding-right: ${(p) => p.$pr || 0}px;
  color: #252423;
`;
const PaneLabel = styled.div`
  margin-top: ${(p) => p.$mt}px;
  margin-right: ${(p) => p.$mr || 0}px;
  line-height: 18px;
  font-size: 14px;
  font-weight: 500;
`;
const DoubleChevron = () => (
  <svg width="8" height="9" viewBox="0 0 8 9" fill="none" stroke="#3b3a39" strokeWidth="1.3">
    <path d="M4 .8.9 4.5 4 8.2M7.4.8 4.3 4.5l3.1 3.7" />
  </svg>
);

/* ---------- page tabs / status ---------- */
const PageTabs = styled.div`height: 35px; display: flex; background: #fff; font-size: 11.7px;`;
const ViewIcon = styled.div`
  width: 24px;
  height: 31px;
  margin-left: ${(p) => p.$ml}px;
  display: flex;
  justify-content: center;
  padding-top: ${(p) => p.$pt}px;
  border-bottom: 3px solid ${(p) => (p.$active ? GREEN : "transparent")};
`;
const Arrows = styled.div`display: flex; gap: 15px; padding: 13px 7px 0 15px;`;
const Tab = styled.div`
  width: 166px;
  border-left: 1px solid #979593;
  border-bottom: 4px solid ${GREEN};
  padding: 10px 0 0 20px;
  font-weight: 500;
`;
const AddTab = styled.div`
  width: 39px;
  background: ${GREEN};
  display: flex;
  justify-content: center;
  padding-top: 11px;
`;
const StatusBar = styled.footer`
  height: 24px;
  flex: none;
  border-top: 1px solid #d2d0ce;
  display: flex;
  align-items: center;
  padding: 1px 4px 0;
  font-size: 11.5px;
  color: #3b3a39;
`;

/* ---------- taskbar ---------- */
const Taskbar = styled.div`
  height: 41px;
  flex: none;
  border-top: 1px solid #000;
  background: linear-gradient(90deg, #e6dacb 0, #ebe0cd 28%, #ecdcd6 38%, #eddcd4 58%, #e4d5cc 72%, #e6dad0 84%, #dad6d1 95%, #d2d0cc 100%);
  display: flex;
  align-items: center;
  color: #1b1a19;
  font-size: 11.6px;
`;
const TaskSearch = styled.div`
  width: 288px;
  height: 40px;
  background: #fff;
  border: 1px solid #c9c5c0;
  display: flex;
  align-items: center;
  padding-left: 11px;
  gap: 11px;
  font-size: 14.4px;
`;
const Task = styled.div`
  width: ${(p) => p.$w}px;
  margin-left: ${(p) => p.$ml}px;
  height: 40px;
  padding-left: ${(p) => p.$pl}px;
  display: flex;
  align-items: center;
  gap: ${(p) => p.$gap}px;
  background: ${(p) => (p.$active ? "#f6f1ec" : "transparent")};
  border-bottom: 2px solid #c98a2b;
  flex: none;
`;
const Clock = styled.div`
  width: 60px;
  display: flex;
  flex-direction: column;
  align-items: center;
  line-height: 18px;
  font-size: 11.3px;
`;
const TrayEdge = styled.div`width: 1px; height: 40px; background: #a5a19d; margin-left: 19px;`;

const Bread = () => (
  <svg width="76" height="38" viewBox="774 748 228 114">
    <defs>
      <linearGradient id="loaf" x1="0" y1="0" x2="0" y2="1">
        <stop offset="0" stopColor="#e9ae5c" /><stop offset="1" stopColor="#c06f1e" />
      </linearGradient>
    </defs>
    <path d="M776 830c20-14 60-6 90-2 50 6 110-6 134-4-8 20-50 34-110 34-60-2-96-10-114-28z" fill="#6f8f1d" />
    <path d="M800 842c40 14 120 18 180-4-30 18-70 20-100 20-40 0-66-6-80-16z" fill="#4d6e12" />
    <g fill="#d9a255" stroke="#b57b31" strokeWidth="2">
      {[[792, 764], [808, 772], [822, 780], [782, 792], [800, 796], [816, 800]].map(([x, y]) => (
        <ellipse key={`${x}${y}`} cx={x} cy={y} rx="12" ry="6" transform={`rotate(38 ${x} ${y})`} />
      ))}
      {[[950, 762], [958, 774], [968, 786], [986, 776], [982, 792], [974, 806]].map(([x, y], i) => (
        <ellipse key={x} cx={x} cy={y} rx="12" ry="6" transform={`rotate(${i < 3 ? 60 : 110} ${x} ${y})`} />
      ))}
    </g>
    <path d="M848 786c4-18 30-22 60-20 34 0 50 10 46 26l-4 26c-20 6-50 10-66 10l-34-10z" fill="url(#loaf)" />
    <path d="M848 794c-4-16 10-24 24-20 16 4 18 18 14 28l-2 26-34-8z" fill="#fbe6b8" stroke="#cf8c3c" strokeWidth="2" />
    <ellipse cx="846" cy="826" rx="36" ry="14" fill="#fbe3b2" stroke="#cf8c3c" strokeWidth="3" transform="rotate(8 846 826)" />
  </svg>
);
const Edge = () => (
  <svg width="25" height="25" viewBox="0 0 24 24">
    <defs>
      <linearGradient id="eg" x1="0" y1="0.3" x2="1" y2="0.4"><stop offset="0" stopColor="#2aa5e0" /><stop offset="0.5" stopColor="#2cc3d6" /><stop offset="1" stopColor="#6cdc5a" /></linearGradient>
      <linearGradient id="eb" x1="0" y1="0" x2="1" y2="1"><stop offset="0" stopColor="#1b8fdc" /><stop offset="1" stopColor="#0c4a93" /></linearGradient>
    </defs>
    <circle cx="12" cy="12" r="12" fill="url(#eb)" />
    <path d="M.3 10.5C1 4.500 6 0 12 0c6.500 0 12 5 12 10.500 0 4-3 6.500-6.500 6.500-2.500 0-4-1-4-2 0-.8 1-1 1-2.800 0-2.200-2-4-4.700-4C5.500 8.200 1.500 9.500.3 14z" fill="url(#eg)" />
    <path d="M9.500 9.500c-3 2-3 8.500 3 11 3.500 1.200 7 .3 9.300-2.300-3 1.300-8 .8-9.300-3.200-.5-1.800.8-2.500 1-3.400-.7-2-2.500-2.700-4-2.100z" fill="#0b417f" />
    <path d="M13.500 15c0 1 1.500 2 4 2 3 0 5.500-1.500 6.300-4 .5 2-.3 4-2 6-3.500 1.500-8.300-.5-8.300-4z" fill="#ecdcd6" />
  </svg>
);
const ChromeLogo = () => (
  <svg width="26" height="26" viewBox="0 0 26 26">
    <circle cx="12" cy="12" r="12" fill="#fbc116" />
    <path d="M12 12 1.600 6A12 12 0 0 1 22.400 6z" fill="#e33b2e" />
    <path d="M1.600 6A12 12 0 0 0 12 24l5.200-9L12 12 6.800 15z" fill="#2aa24c" />
    <path d="M12 6h10.400A12 12 0 0 0 1.600 6l5.200 9z" fill="#e33b2e" />
    <circle cx="12" cy="12" r="6" fill="#fff" /><circle cx="12" cy="12" r="4.700" fill="#2a78e8" />
    <circle cx="18" cy="18" r="7.600" fill="#17130f" />
    <path d="M18 14v3M15.500 21.500h5l-1-2.500h-3zM17 18.500l1-2 1 2z" fill="#9a7a42" stroke="#9a7a42" strokeWidth=".5" />
  </svg>
);

function RibbonButton({ item }) {
  return (
    <BigButton $w={item.w} $off={item.off}>
      {icons[item.i]}
      <Line $first><Fit w={item.a[1]}>{item.a[0]}</Fit></Line>
      {item.b && (
        <Line>
          {item.b[0] && <Fit w={item.b[1]}>{item.b[0]}</Fit>}
          {item.b[2] && <Chevron color={item.off ? "#bdbbb9" : "#252423"} />}
        </Line>
      )}
    </BigButton>
  );
}

export default function App() {
  return (
    <>
      <Global />
      <Screen>
        <TitleBar>
          <Cell $w={31}>
            <Glyph vb="50 28 48 48" w={16} h={16}><path d="M53 32h42v42H58l-5-5zM62 32v15h25V32M62 74V58h25v16M67 74v-8" /></Glyph>
          </Cell>
          <Cell $w={30}>
            <Glyph vb="141 28 48 48" w={16} h={16}><path d="M146 32v17h17M146 48c8-10 15-15 24-15 16 0 20 17 9 27l-14 14" strokeWidth="4" /></Glyph>
          </Cell>
          <Cell $w={25}>
            <Glyph vb="231 28 48 48" w={16} h={16} color="#c2c0be"><path d="M273 32v17h-17M273 48c-8-10-15-15-24-15-16 0-20 17-9 27l14 14" strokeWidth="4" /></Glyph>
          </Cell>
          <DocName $w={42}><Fit w={37}>project</Fit></DocName>
          <DocName $w={8}>•</DocName>
          <DocName $w={177}><Fit w={170}>Last saved: Yesterday at 9:39 PM</Fit></DocName>
          <Cell $w={230}>
            <svg width="9" height="6" viewBox="0 0 9 6" fill="#f8e3c4" stroke="#a0793f"><path d="M.8.600h7.400L4.500 4.800z" /></svg>
          </Cell>
          <SearchBox>
            <Glyph vb="412 26 48 48" w={16} h={16}><circle cx="442" cy="43" r="15" /><path d="M431 54 413 72" /></Glyph>
            <Fit w={42}>Search</Fit>
          </SearchBox>
          <Cell $w={192} />
          <Cell $w={46}><Fit w={36}>Sign in</Fit></Cell>
          <Cell $w={52}>
            <Avatar>
              <svg width="14" height="17" viewBox="0 0 14 17" fill="none" stroke="#605e5c" strokeWidth="1.100"><circle cx="7" cy="4" r="3" /><path d="M1.500 9.500h11v1.500c0 3-2.500 4.500-5.500 4.500S1.500 14 1.500 11z" /></svg>
            </Avatar>
          </Cell>
          <Cell $w={44}><svg width="10" height="10" stroke="#252423"><path d="M0 5.500h10" /></svg></Cell>
          <Cell $w={44}><svg width="10" height="10" fill="none" stroke="#252423"><rect x=".5" y=".5" width="9" height="9" /></svg></Cell>
          <svg width="10" height="10" stroke="#252423" strokeWidth="1.100"><path d="M0 0 10 10M10 0 0 10" /></svg>
        </TitleBar>

        <MenuBar>
          {[["File", 21, 34], ["Home", 38, 23], ["Insert", 35, 24], ["Modeling", 59, 23], ["View", 30, 23], ["Optimize", 56, 24], ["Help", 28, 0]].map(([l, w, g]) => (
            <MenuItem key={l} $w={w} $gap={g} $active={l === "Home"}><Fit w={w}>{l}</Fit></MenuItem>
          ))}
          <ShareButton>
            <svg width="16" height="15" viewBox="0 0 16 15" fill="none" stroke="#fff" strokeWidth="1.200"><path d="M4 2.500H.8v11.300h11.400V11M9.500 1l5.300 4.300-5.300 4.200V7C6.500 7 5 8 3.500 10.500 3.700 6.500 6 3.800 9.500 3.600z" /></svg>
            <Cell $w={0} />
            <Fit w={30}>Share</Fit>
            <Chevron color="#fff" w={10} sw={1.1} />
          </ShareButton>
        </MenuBar>

        <RibbonWrap>
          <Ribbon>
            <Group $w={161}>
              <GroupBody $pl={9}>
                <BigButton $w={38} $off>
                  <Glyph vb="68 237 90 96" w={30} color="#bdbbb9">
                    <path d="M77 252h58v74H77z" stroke="#f3cfa0" fill="#fdf6ec" strokeWidth="4" />
                    <path d="M92 264v-11h8c1-10 12-10 13 0h8v11z" fill="#fff" />
                    <rect x="111" y="277" width="47" height="58" fill="#fff" stroke="none" />
                    <rect x="115" y="281" width="40" height="50" fill="#fafafa" />
                  </Glyph>
                  <Line $first><Fit w={28}>Paste</Fit></Line>
                </BigButton>
                <ClipList>
                  <ClipItem>
                    <Glyph vb="180 237 50 48" w={17} h={16} color="#bdbbb9"><path d="M194 238 211 270M213 238 196 270" /><circle cx="196" cy="276" r="6" stroke="#a5cbe4" /><circle cx="212" cy="276" r="6" stroke="#a5cbe4" /></Glyph>
                    <Fit w={19}>Cut</Fit>
                  </ClipItem>
                  <ClipItem>
                    <Glyph vb="180 311 50 50" w={17} h={17} color="#bdbbb9"><path d="M198 352h-17v-38h26v6M199 322h17l11 11v26h-28zM216 322v11h11M205 340h16M205 349h16" /></Glyph>
                    <Fit w={27}>Copy</Fit>
                  </ClipItem>
                  <ClipItem>
                    <Glyph vb="180 390 50 48" w={17} h={16} color="#bdbbb9">
                      <path d="M182 410c10 1 16-2 22-6l15 15c-3 8-8 13-15 15-7-8-14-15-22-24z" fill="#f8dfc0" stroke="#f0c28c" />
                      <path d="M200 402 216 418 221 411 217 407 228 396 224 391 212 402 207 397z" fill="#fafafa" />
                    </Glyph>
                    <Fit w={79}>Format painter</Fit>
                  </ClipItem>
                </ClipList>
              </GroupBody>
              <GroupLabel><Fit w={43}>Clipboard</Fit></GroupLabel>
            </Group>
            {groups.map((g) => (
              <Group key={g.label[0]} $w={g.w}>
                <GroupBody $pl={g.pl}>{g.items.map((it) => <RibbonButton key={it.i} item={it} />)}</GroupBody>
                <GroupLabel><Fit w={g.label[1]}>{g.label[0]}</Fit></GroupLabel>
              </Group>
            ))}
            <Collapse>
              <svg width="10" height="7" viewBox="0 0 10 7" fill="none" stroke="#252423" strokeWidth="1.700"><path d="M1 5.500 5 1.500 9 5.500" /></svg>
            </Collapse>
          </Ribbon>
        </RibbonWrap>

        <Workspace>
          <Rail>
            <RailItem $active>
              <Glyph vb="42 51 42 48" w={14} h={16}><path d="M43 52v43h41" strokeWidth="3" /><path d="M49 66h6v23h-6zM61 72h6v17h-6zM73 59h6v30h-6z" /></Glyph>
            </RailItem>
            <RailItem>
              <Glyph vb="39 170 48 46" w={16} h={15.3}><path d="M40.500 172h45v42h-45zM40 178h46M40 190h46M40 202h46M55 178v36M70 178v36" /></Glyph>
            </RailItem>
            <RailItem>
              <Glyph vb="35 287 56 56" w={18.6} h={18.6}><path d="M37 304h21v21H37zM68 290h21v21H68zM68 320h21v21H68zM37 310h21M68 296h21M68 326h21M50 304v-8h18M50 325v8h18" /></Glyph>
            </RailItem>
            <RailItem>
              <svg width="19" height="20" viewBox="32 408 56 60" fill="none" stroke="#3b3a39" strokeWidth="3">
                <path d="M46 440v-27h18l12 12v16M64 413v12h12M82 430v20c0 5-3 7-7 7" />
                <text x="32" y="459" fontFamily={UI} fontWeight="700" fontSize="20" fill="#3b3a39" stroke="none" textLength="44" lengthAdjust="spacingAndGlyphs">DAX</text>
              </svg>
            </RailItem>
            <RailItem>
              <svg width="20" height="20" viewBox="34 526 60 60" fill="none" stroke="#3b3a39" strokeWidth="3">
                <path d="M46 560v-27h20l14 13v14M66 533v13h14" />
                <text x="35" y="578" fontFamily={UI} fontWeight="700" fontSize="20" fill="#3b3a39" stroke="none" textLength="56" lengthAdjust="spacingAndGlyphs">TMDL</text>
              </svg>
            </RailItem>
          </Rail>

          <Center>
            <Canvas>
              <Wallpaper />
              <Page>
                <Banner><Fit w={485}>Retail Sales &amp; Customer Insights Dashboard</Fit></Banner>
                <Row $mt={11}>
                  {[["2.26M", 67, "Total Sales", 76, 175, 49.500], ["4922", 56, "Total Orders", 89, 170, 15],
                    ["459.48", 77, "Avg Sales per Order", 143, 175.500, 10], ["2.85K", 67, "Sales per Customer", 139, 167, 15.500]].map(([v, vw, l, lw, w, ml]) => (
                    <Kpi key={l} $w={w} $ml={ml}>
                      <KpiValue><Fit w={vw}>{v}</Fit></KpiValue>
                      <KpiLabel><Fit w={lw}>{l}</Fit></KpiLabel>
                    </Kpi>
                  ))}
                </Row>
                <Row $mt={10.500}>
                  <Panel $w={192.500} $h={176} $ml={12.500}>
                    <SlicerHead><Fit w={22}>Year</Fit><Chevron color="#777" w={11} sw={0.9} /></SlicerHead>
                    <SlicerGrid>
                      {["2015", "2017", "2016", "2018"].map((y) => <SlicerTile key={y}><Fit w={19.500}>{y}</Fit></SlicerTile>)}
                    </SlicerGrid>
                  </Panel>
                  <Panel $w={250} $h={176} $ml={12.200}><RegionChart /></Panel>
                  <Panel $w={201} $h={176} $ml={12}><SegmentChart /></Panel>
                  <Panel $w={161} $h={176} $ml={13}>
                    <Table>
                      <TRow $head>
                        <Fit w={69}>Customer Name</Fit>
                        <SortCol><Fit w={45}>Total Sales</Fit><svg width="5" height="3"><path d="M0 0h5L2.500 3z" fill="#252423" /></svg></SortCol>
                      </TRow>
                      {customers.map(([n, w, v], i) => (
                        <TRow key={n} $alt={i % 2 === 1} $last={i === 9}><Fit w={w}>{n}</Fit><Fit w={41}>{v}</Fit></TRow>
                      ))}
                      <TRow><Fit w={21}>Total</Fit><Fit w={46}>153,811.17</Fit></TRow>
                    </Table>
                  </Panel>
                </Row>
                <Row $mt={13}>
                  <Panel $w={173.600} $h={168} $ml={12.500}><CategoryChart /></Panel>
                  <Panel $w={223.600} $h={168} $ml={9.400}><YearChart /></Panel>
                  <Panel $w={214} $h={168} $ml={7.400}><MonthChart /></Panel>
                  <Panel $w={216} $h={163} $ml={8}><TreeChart /></Panel>
                </Row>
              </Page>
            </Canvas>
            <PageTabs>
              <ViewIcon $active $ml={10} $pt={7}>
                <svg width="16" height="16" fill="none" stroke="#3b3a39" strokeWidth="1.200"><rect x=".8" y=".8" width="14.400" height="11" rx="2" /><path d="M5.500 12v2.500M10.500 12v2.500M3.500 14.700h9" /></svg>
              </ViewIcon>
              <ViewIcon $ml={20} $pt={6}>
                <svg width="11" height="18" fill="none" stroke="#3b3a39" strokeWidth="1.200"><rect x=".8" y=".8" width="9.400" height="16.400" rx="2" /><path d="M4 14.500h3" /></svg>
              </ViewIcon>
              <Arrows>
                <svg width="6" height="9" fill="none" stroke="#797775"><path d="M5 1v7L1 4.500z" /></svg>
                <svg width="6" height="9" fill="none" stroke="#a4565f"><path d="M1 1v7l4-3.500z" /></svg>
              </Arrows>
              <Tab><Fit w={123}>Retail Sales Dashboard</Fit></Tab>
              <AddTab><svg width="12" height="12" stroke="#fff" strokeWidth="3"><path d="M6 .5v11M.5 6h11" /></svg></AddTab>
            </PageTabs>
          </Center>

          <Pane $w={32} $white $pr={1}>
            <DoubleChevron />
            <PaneLabel $mt={19}>
              <svg width="9" height="9" stroke="#252423"><path d="M8.500 0v9M5.500 1.500v6M2.500 3v3" /></svg>
            </PaneLabel>
            <PaneLabel $mt={10}><Fit w={43} vertical>Filters</Fit></PaneLabel>
          </Pane>
          <Pane $w={35}><DoubleChevron /><PaneLabel $mt={15} $mr={1}><Fit w={99} vertical>Visualizations</Fit></PaneLabel></Pane>
          <Pane $w={35}><DoubleChevron /><PaneLabel $mt={15} $mr={4}><Fit w={34} vertical>Data</Fit></PaneLabel></Pane>
        </Workspace>

        <StatusBar>
          <Cell $w={958}><Fit w={59}>Page 1 of 1</Fit></Cell>
          <svg width="124" height="14" fill="none" stroke="#3b3a39">
            <path d="M0 7.500h5" strokeWidth="1.500" /><path d="M9 7.500h100M59.500 4.500v5M115 7.500h8M119 3.500v8" />
            <path d="M42 2v11" strokeWidth="4" />
          </svg>
          <Cell $w={12} />
          <Cell $w={43}><Fit w={23}>68%</Fit></Cell>
          <Cell $w={29}>
            <svg width="14" height="11" fill="none" stroke="#3b3a39"><rect x=".5" y=".5" width="13" height="10" rx="1" /><path d="M3.500 4.500v-1h2M8.500 3.500h2v1M10.500 6.500v1h-2M5.500 7.500h-2v-1" /></svg>
          </Cell>
          <Fit w={192}>Update available (click to download)</Fit>
        </StatusBar>

        <Taskbar>
          <Cell $w={48} $center>
            <svg width="16" height="16" fill="#000"><path d="M0 2.300 6.500 1.400V7.500H0zM7.500 1.200 16 0v7.500H7.500zM0 8.500h6.500v6.100L0 13.700zM7.500 8.500H16V16l-8.500-1.200z" /></svg>
          </Cell>
          <TaskSearch>
            <svg width="17" height="17" fill="none" stroke="#1b1a19" strokeWidth="1.300"><circle cx="10.500" cy="6.300" r="5.500" /><path d="M6.500 10.300.8 16" /></svg>
            <Cell $w={159}><Fit w={128}>Type here to search</Fit></Cell>
            <Bread />
          </TaskSearch>
          <Cell $w={15} />
          <Cell $w={48}>
            <svg width="18" height="16" viewBox="0 0 18 16" fill="none" stroke="#000" strokeWidth="1.200"><path d="M1.500 0v2.500h9.500V0M1.500 16v-2.500h9.500V16M1.500 5h9.500v6H1.500zM14.500 0v16" /><rect x="13.500" y="4.500" width="2.500" height="2.500" fill="#000" /></svg>
          </Cell>
          <CopilotLogo w={25} h={25} vb="906 238 97 94" />
          <Task $w={151} $ml={16} $pl={9} $gap={10}>
            <svg width="15" height="20" viewBox="0 0 15 20"><path d="M1 1h9l4 4v12l-4 2H1z" fill="#f3cf6b" /><path d="M1 1l5 3v16l-5-1z" fill="#fbe39a" /><path d="M10 1h4v13l-4 2z" fill="#e8b84a" /></svg>
            <Fit w={105}>Retail_Sales_Custo...</Fit>
          </Task>
          <Cell $w={58} $center><Edge /></Cell>
          <Task $w={150} $ml={0} $pl={6} $gap={2}>
            <ChromeLogo />
            <Fit w={109}>Data analyst projec...</Fit>
          </Task>
          <Task $w={158} $ml={5} $pl={12} $gap={7} $active>
            <svg width="19" height="24" viewBox="0 0 19 24"><rect x="11" y="0" width="8" height="24" rx="1" fill="#d18b12" /><rect x="5.500" y="6" width="8.500" height="18" rx="1" fill="#e9b424" /><rect x="0" y="12" width="8.500" height="12" rx="1" fill="#f6d35a" /></svg>
            <Fit w={37}>project</Fit>
          </Task>
          <Cell $w={28} />
          <Cell $w={30}>
            <svg width="20" height="20"><defs><linearGradient id="sun" x1="0" y1="0" x2=".7" y2="1"><stop offset="0" stopColor="#fcc400" /><stop offset="1" stopColor="#e8620a" /></linearGradient></defs><circle cx="10" cy="10" r="10" fill="url(#sun)" /></svg>
          </Cell>
          <Cell $w={55}><Fit w={29}>29°C</Fit></Cell>
          <Cell $w={24}><svg width="12" height="8" fill="none" stroke="#1b1a19" strokeWidth="1.300"><path d="M.5 7 6 1.500 11.500 7" /></svg></Cell>
          <Cell $w={22}>
            <svg width="12" height="16" fill="none" stroke="#1b1a19" strokeWidth="1.300"><rect x="1" y="4" width="7" height="8" rx="1.500" /><path d="M8.500 7 11 5v6L8.500 9M1.500 1.500C4 0 7 0 9 1.500M1.500 14.500c2.500 1.500 5.500 1.500 7.500 0" /></svg>
          </Cell>
          <Cell $w={25}>
            <svg width="17" height="15" fill="none"><path d="M3 10C-.5 8.500.5 4.500 4 4.500 5.500.500 11.500.500 12.500 4.500c2.500.5 3 2.500 2.500 3.500L6 11z" fill="#c0bdb9" stroke="#555" /><circle cx="11.500" cy="10" r="4.800" fill="#777" /><path d="M10.300 8v4M12.800 8v4" stroke="#fff" /></svg>
          </Cell>
          <Cell $w={26}>
            <svg width="15" height="10" fill="none" stroke="#1b1a19" strokeWidth="1.300"><rect x=".7" y=".7" width="12" height="8" /><path d="M14 3.500v3" /><path d="M2.500 2.500h3.500v4.500H2.500z" fill="#1b1a19" stroke="none" /></svg>
          </Cell>
          <Cell $w={21}>
            <svg width="13" height="13" fill="none" stroke="#77736f"><path d="M.5 12.500C.5 6 6 .8 12.500.8M3.500 12.500c0-5 4-8.500 9-8.500" /><path d="M6.500 12.500c0-3.500 2.500-5.500 6-5.500M9.500 12.500c0-1.500 1-2.500 3-2.500" stroke="#1b1a19" /><circle cx="11.500" cy="12" r="1.200" fill="#1b1a19" stroke="none" /></svg>
          </Cell>
          <Cell $w={26}>
            <svg width="17" height="14" fill="none" stroke="#1b1a19" strokeWidth="1.100"><path d="M.7 4.500h2.600L7 1.200v11.600L3.300 9.500H.7z" /><path d="M9 5c1 1.200 1 2.800 0 4" /><path d="M11.300 3.300c2 2.200 2 5.200 0 7.400M13.600 1.500c3 3.200 3 7.800 0 11" stroke="#8b8784" /></svg>
          </Cell>
          <Cell $w={32}><Fit w={23}>ENG</Fit></Cell>
          <Clock><Fit w={43}>8:13 AM</Fit><Fit w={58}>10/17/2025</Fit></Clock>
          <Cell $w={14} />
          <svg width="17" height="17" fill="none" stroke="#1b1a19" strokeWidth="1.300"><path d="M.8 1.500h15.400v11.500h-5L8.500 15.800 5.800 13H.8z" /></svg>
          <TrayEdge />
        </Taskbar>
      </Screen>
    </>
  );
}
